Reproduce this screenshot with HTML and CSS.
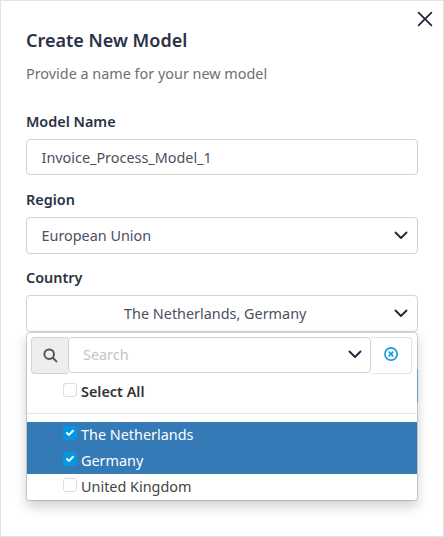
FILE: index.html
```html
<!DOCTYPE html>
<html lang="en">
<head>
<meta charset="utf-8">
<title>Create New Model</title>
<link rel="stylesheet" href="styles.css">
</head>
<body>
<main class="dialog">
  <button class="close" aria-label="Close"><svg width="16" height="16" viewBox="0 0 16 16"><path d="M1.6 1.6 14.4 14.4M14.4 1.6 1.6 14.4"/></svg></button>
  <h1 class="title">Create New Model</h1>
  <p class="subtitle">Provide a name for your new model</p>
  <label class="label">Model Name</label>
  <div class="control"><span class="value">Invoice_Process_Model_1</span></div>
  <label class="label">Region</label>
  <div class="control"><span class="value">European Union</span><svg class="chevron" width="14" height="9" viewBox="0 0 14 9"><path d="M1.5 1.5 7 7 12.5 1.5"/></svg></div>
  <label class="label">Country</label>
  <div class="picker">
    <div class="control"><span class="value centered">The Netherlands, Germany</span><svg class="chevron" width="14" height="9" viewBox="0 0 14 9"><path d="M1.5 1.5 7 7 12.5 1.5"/></svg></div>
    <div class="menu">
      <div class="search">
        <span class="search-icon"><svg width="15" height="15" viewBox="0 0 15 15"><circle cx="6.2" cy="6.2" r="4.8"/><path d="M9.8 9.8 13.4 13.4"/></svg></span>
        <div class="search-field"><span class="placeholder">Search</span><svg class="chevron" width="14" height="9" viewBox="0 0 14 9"><path d="M1.5 1.5 7 7 12.5 1.5"/></svg></div>
        <span class="clear"><svg width="14" height="14" viewBox="0 0 14 14"><circle cx="7" cy="7" r="6.1"/><path d="M5.2 5.2 8.8 8.8M8.8 5.2 5.2 8.8"/></svg></span>
      </div>
      <div class="option all"><span class="box"></span><span class="name">Select All</span></div>
      <div class="divider"></div>
      <div class="option selected"><span class="box"><svg width="10" height="8" viewBox="0 0 10 8"><path d="M1.9 4 4 5.9 8 1.7"/></svg></span><span class="name">The Netherlands</span></div>
      <div class="option selected"><span class="box"><svg width="10" height="8" viewBox="0 0 10 8"><path d="M1.9 4 4 5.9 8 1.7"/></svg></span><span class="name">Germany</span></div>
      <div class="option"><span class="box"></span><span class="name">United Kingdom</span></div>
    </div>
  </div>
  <div class="actions"><span class="submit"></span></div>
</main>
</body>
</html>
```
FILE: styles.css
```css
* { box-sizing: border-box; }
body { margin: 0; background: #fff; font-family: "Noto Sans", sans-serif; font-size: 14.4px; color: #2a3245; }
svg { display: block; fill: none; stroke-linecap: round; stroke-linejoin: round; }
.dialog { position: relative; width: 444px; height: 537px; padding: 26px 25px 0; border: 1px solid #e2e2e2; }
.close { position: absolute; top: 10px; right: 10px; padding: 0; border: 0; background: none; }
.close svg { stroke: #1e2639; stroke-width: 1.7; }
.title { margin: 0; font-size: 18px; line-height: 26px; font-weight: 600; }
.subtitle { margin: 10px 0 25px; line-height: 22px; color: #707070; }
.label { display: block; height: 29px; line-height: 24px; font-weight: 600; }
.control { display: flex; align-items: center; height: 36.4px; margin-bottom: 12.8px; padding: 0 9px 0 14.5px; border: 1px solid #d2d2d2; border-radius: 4px; background: #fff; color: #4b5060; }
.value { flex: 1; padding-top: 1px; line-height: 20px; }
.centered { padding: 0 5px 0 0; text-align: center; }
.chevron { flex: none; stroke: #20293c; stroke-width: 1.9; }
.picker { position: relative; }
.picker .control { margin-bottom: 0; }
.picker .chevron { margin-bottom: 1px; }
.menu { position: absolute; z-index: 1; top: 36.4px; left: 0; width: 392px; height: 169px; padding-top: 4px; border: 1px solid rgba(0,0,0,.15); border-radius: 4px; background: #fff; background-clip: padding-box; box-shadow: 0 6px 12px rgba(0,0,0,.18); }
.search { display: flex; width: 381px; height: 37px; margin: 0 0 4px 4px; }
.search-icon { display: grid; place-items: center; width: 37px; border: 1px solid #d3d3d3; border-right: 0; border-radius: 4px 0 0 4px; background: #eee; }
.search-icon svg { stroke: #555; stroke-width: 2; }
.search-field { display: flex; align-items: center; justify-content: space-between; width: 303px; height: 36px; padding: 0 8px 0 14px; border: 1px solid #d0d1d4; border-radius: 4px; }
.placeholder { color: #c2c4c9; }
.clear { display: grid; place-items: center; width: 41px; padding-bottom: 2px; border: 1px solid #e2e2e2; border-left: 0; border-radius: 0 4px 4px 0; }
.clear svg { stroke: #1b9ddd; stroke-width: 1.7; }
.option { display: flex; gap: 4px; height: 26px; padding-left: 36px; color: #444; line-height: 26px; }
.all { color: #333; font-weight: 600; line-height: 28px; }
.box { display: grid; place-items: center; width: 14px; height: 14px; margin-top: 4px; border: 1px solid #ddd; border-radius: 3px; background: #fff; }
.all .box { margin-top: 5px; }
.divider { height: 1px; margin: 9px 0 8px; background: #e5e5e5; }
.selected { background: #337ab7; color: #fff; }
.selected .box { border-color: #0497e2; background: #0497e2; }
.selected svg { stroke: #fff; stroke-width: 2; }
.actions { display: flex; justify-content: flex-end; padding-top: 37px; }
.submit { width: 80px; height: 34px; border-radius: 1px; background: #7fcfff; }
```
